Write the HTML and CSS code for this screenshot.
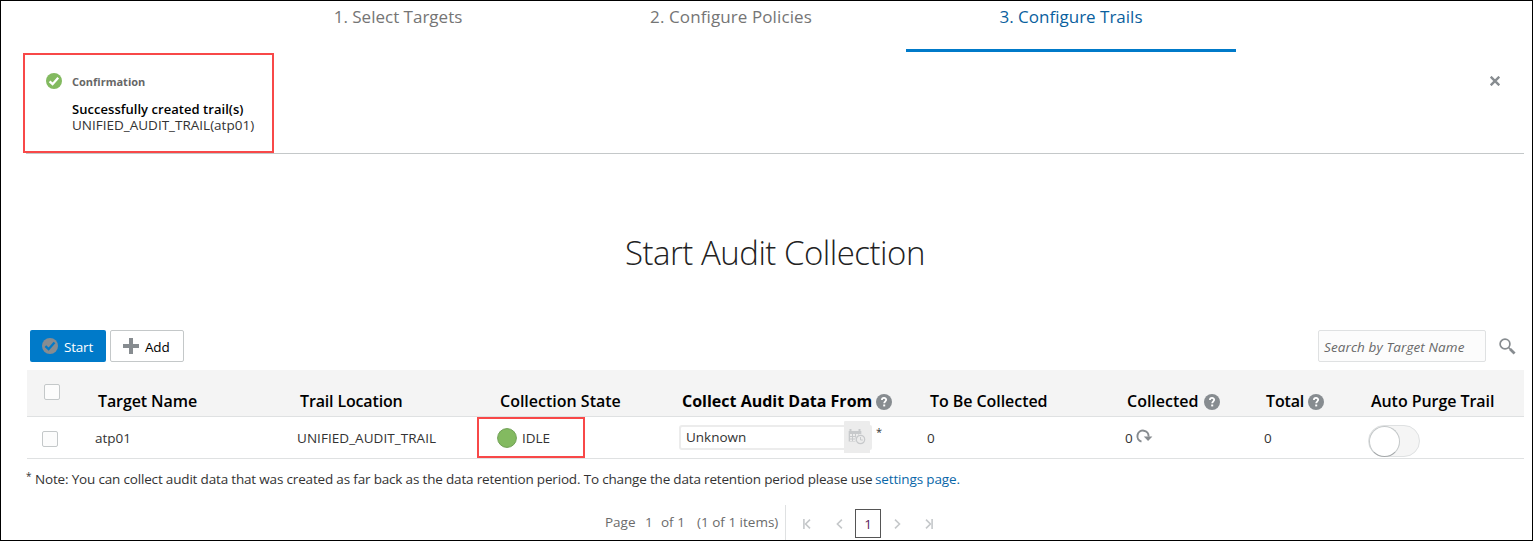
FILE: index.html
```
<!DOCTYPE html>
<html lang="en">
<head>
<meta charset="utf-8">
<title>Start Audit Collection</title>
<link rel="stylesheet" href="styles.css">
</head>
<body>
<div class="page">
  <nav class="train">
    <div class="step step-1">1. Select Targets</div>
    <div class="step step-2">2. Configure Policies</div>
    <div class="step step-3 active">3. Configure Trails</div>
  </nav>

  <section class="message">
    <svg class="ok" width="16" height="16" viewBox="0 0 16 16"><circle cx="8" cy="8" r="8" fill="#83ba60"/><path d="M3.6 8.3l3 2.9 5.6-6.4" fill="none" stroke="#fff" stroke-width="2.3"/></svg>
    <div class="message-text">
      <div class="message-type">Confirmation</div>
      <div class="message-title">Successfully created trail(s)</div>
      <div class="message-detail">UNIFIED_AUDIT_TRAIL(atp01)</div>
    </div>
    <svg class="close" width="10" height="10" viewBox="0 0 10 10"><path d="M.7.7l8.6 8.6M9.3.7L.7 9.3" stroke="#878c90" stroke-width="2.4"/></svg>
    <div class="mark mark-message"></div>
  </section>

  <h1 class="title">Start Audit Collection</h1>

  <div class="toolbar">
    <button class="btn primary"><svg width="16" height="16" viewBox="0 0 16 16"><circle cx="8" cy="8" r="8" fill="#878c90"/><path d="M3.4 8.2l3.2 3 5.9-6.6" fill="none" stroke="#007ac9" stroke-width="2.3"/></svg><span>Start</span></button>
    <button class="btn"><svg width="16" height="16" viewBox="0 0 16 16"><path d="M6 0h4v6h6v4h-6v6H6v-6H0V6h6z" fill="#878c90"/></svg><span class="add">Add</span></button>
    <div class="search">Search by Target Name</div>
    <svg class="lens" width="17" height="17" viewBox="0 0 17 17"><circle cx="6" cy="6" r="4.9" fill="none" stroke="#878c90" stroke-width="1.7"/><path d="M9.3 9.3l2 2" stroke="#878c90" stroke-width="1.6"/><path d="M11 11l4.6 4.4" stroke="#878c90" stroke-width="2.8"/></svg>
  </div>

  <div class="table">
    <div class="row head">
      <div class="cell"><span class="check"></span></div>
      <div class="cell tn">Target Name</div>
      <div class="cell tl">Trail Location</div>
      <div class="cell">Collection State</div>
      <div class="cell strong"><span>Collect Audit Data From</span><svg class="help" width="16" height="16" viewBox="0 0 16 16"><circle cx="8" cy="8" r="8" fill="#878c90"/><path d="M5.9 6.1c0-2.9 4.3-2.7 4.3-.3 0 1.5-2 1.6-2 3.5" fill="none" stroke="#fff" stroke-width="1.8"/><path d="M7.2 10.5h2v1.9h-2z" fill="#fff"/></svg></div>
      <div class="cell tbc">To Be Collected</div>
      <div class="cell"><span>Collected</span><svg class="help" width="16" height="16" viewBox="0 0 16 16"><circle cx="8" cy="8" r="8" fill="#878c90"/><path d="M5.9 6.1c0-2.9 4.3-2.7 4.3-.3 0 1.5-2 1.6-2 3.5" fill="none" stroke="#fff" stroke-width="1.8"/><path d="M7.2 10.5h2v1.9h-2z" fill="#fff"/></svg></div>
      <div class="cell total"><span>Total</span><svg class="help" width="16" height="16" viewBox="0 0 16 16"><circle cx="8" cy="8" r="8" fill="#878c90"/><path d="M5.9 6.1c0-2.9 4.3-2.7 4.3-.3 0 1.5-2 1.6-2 3.5" fill="none" stroke="#fff" stroke-width="1.8"/><path d="M7.2 10.5h2v1.9h-2z" fill="#fff"/></svg></div>
      <div class="cell apt">Auto Purge Trail</div>
    </div>
    <div class="row data">
      <div class="cell"><span class="check"></span></div>
      <div class="cell">atp01</div>
      <div class="cell loc">UNIFIED_AUDIT_TRAIL</div>
      <div class="cell state"><svg width="20" height="20" viewBox="0 0 20 20"><circle cx="10" cy="10" r="9.4" fill="#83ba60" stroke="#6f9f54" stroke-width="1"/></svg><span>IDLE</span><div class="mark mark-state"></div></div>
      <div class="cell from">
        <div class="date"><span>Unknown</span></div>
        <div class="picker"><svg width="18" height="18" viewBox="0 0 18 18"><path d="M.7 3h12.6v10.5H.7z" fill="#c7c9cb"/><path d="M2.5 1v2.5M11.5 1v2.5" stroke="#c7c9cb" stroke-width="2"/><path d="M2 6h2v2H2zM5 6h2v2H5zM8 6h2v2H8zM11 6h1.5v2H11zM2 9h2v1.5H2zM5 9h2v1.5H5zM8 9h2v1.5H8zM2 11.5h2V13H2zM5 11.5h2V13H5z" fill="#ececec"/><circle cx="12.5" cy="11.5" r="5.4" fill="#ececec"/><circle cx="12.5" cy="11.5" r="4.2" fill="none" stroke="#c7c9cb" stroke-width="1.2"/><path d="M12.5 9v3h2.3" fill="none" stroke="#c7c9cb"/></svg></div>
        <div class="date-end"></div>
        <span class="star">*</span>
      </div>
      <div class="cell">0</div>
      <div class="cell collected"><span>0</span><svg width="17" height="14" viewBox="0 0 17 14"><path d="M5.5 12.6A5.6 5.6 0 1 1 12.6 7.6" fill="none" stroke="#878c90" stroke-width="2"/><path d="M7.8 7.6h8.6l-4.3 4.3z" fill="#878c90"/></svg></div>
      <div class="cell zero">0</div>
      <div class="cell"><span class="switch"><span class="thumb"></span></span></div>
    </div>
  </div>

  <div class="note"><span class="note-star">*</span><span class="note-text">Note: You can collect audit data that was created as far back as the data retention period. To change the data retention period please use</span><a class="link">settings page.</a></div>

  <div class="pager">
    <span class="p-page">Page</span><span class="p-num">1</span><span class="p-of">of 1</span><span class="p-items">(1 of 1 items)</span>
    <div class="pager-nav">
      <svg width="8" height="10" viewBox="0 0 8 10"><path d="M.9 0v10" stroke="#c5c8ca" stroke-width="1.6"/><path d="M7 .6L2.6 5 7 9.4" fill="none" stroke="#c5c8ca" stroke-width="1.6"/></svg>
      <svg class="prev" width="7" height="10" viewBox="0 0 7 10"><path d="M5.9.6L1.4 5l4.5 4.4" fill="none" stroke="#c5c8ca" stroke-width="1.6"/></svg>
      <span class="current">1</span>
      <svg class="next" width="7" height="10" viewBox="0 0 7 10"><path d="M1 .6L5.5 5 1 9.4" fill="none" stroke="#c5c8ca" stroke-width="1.6"/></svg>
      <svg class="last" width="8" height="10" viewBox="0 0 8 10"><path d="M7.1 0v10" stroke="#c5c8ca" stroke-width="1.6"/><path d="M1 .6L5.4 5 1 9.4" fill="none" stroke="#c5c8ca" stroke-width="1.6"/></svg>
    </div>
  </div>
</div>
</body>
</html>
```
FILE: styles.css
```
* { box-sizing: border-box; }
body { margin: 0; background: #fff; color: #333; font: 13.5px/20px "Open Sans", "Noto Sans", sans-serif; }
svg { display: block; flex: none; }
.page { width: 1533px; height: 541px; border: 1px solid #000; overflow: hidden; display: flex; flex-direction: column; }

.train { display: flex; height: 51px; padding-left: 239px; flex: none; }
.step { height: 51px; padding-top: 5px; line-height: 22px; font-size: 17px; color: #757575; text-align: center; white-space: nowrap; }
.step-1 { width: 316px; }
.step-2 { width: 350px; letter-spacing: .1px; }
.step-3 { width: 330px; }
.active { color: #0a5f9e; border-bottom: 3px solid #007ac9; }

.message { position: relative; display: flex; flex: none; height: 102px; margin: 0 8px 0 25px; padding: 21px 24px 0 20px; border-bottom: 1px solid #c4c8c9; }
.ok { margin-right: 10px; }
.message-text { flex: 1; padding-top: 1px; }
.message-type { font-size: 11px; font-weight: 700; line-height: 16px; color: #666; }
.message-title { font-size: 13px; font-weight: 600; line-height: 16px; margin-top: 11px; color: #000; letter-spacing: .04px; }
.message-detail { line-height: 16px; }
.close { margin-top: 3px; }
.mark { position: absolute; border: 2px solid #f84848; }
.mark-message { left: -3px; top: 1px; width: 251px; height: 100px; }

.title { margin: 77px 0 0 624px; font-size: 33px; font-weight: 300; line-height: 44px; letter-spacing: -.5px; color: #222; white-space: nowrap; flex: none; }

.toolbar { display: flex; align-items: center; flex: none; height: 32px; margin: 55px 16px 0 29px; }
.btn { display: flex; align-items: center; height: 32px; margin: 0 4px 0 0; padding: 1px 0 0 12px; width: 76px; border: 0; border-radius: 2px; background: #fff; color: #000; font: inherit; }
.btn svg { margin-right: 6px; }
.btn span { letter-spacing: -.2px; }
.primary { background: #007ac9; color: #fff; }
.btn:not(.primary) { width: 74px; border: 1px solid #c4c8c9; }
.btn:not(.primary) svg { margin-top: -2px; }
.primary svg { margin-top: -1px; }
.search { margin-left: auto; width: 168px; height: 32px; line-height: 32px; padding-left: 5px; border: 1px solid #dfe1e2; border-radius: 2px; background: #fcfcfc; color: #696969; font-style: italic; letter-spacing: .1px; white-space: nowrap; }
.lens { margin-left: 13px; }

.table { flex: none; margin: 8px 8px 0 26px; }
.row { display: grid; grid-template-columns: 68px 202px 200px 182px 248px 197px 139px 105px 156px; border-bottom: 1px solid #dfe1e2; }
.cell { display: flex; align-items: center; white-space: nowrap; }
.head { height: 47px; background: #f4f4f4; color: #000; font-size: 16px; font-weight: 600; padding-top: 15px; }
.head .cell { padding-left: 3px; }
.tn { letter-spacing: -.1px; }
.tl { letter-spacing: -.15px; }
.tbc, .apt { letter-spacing: -.06px; }
.strong { font-weight: 700; }
.help { margin: 2px 0 0 5px; }
.strong .help, .total .help { margin-left: 4px; }
.total { letter-spacing: -.15px; }
.check { width: 16px; height: 16px; border: 1px solid #c4c8c9; border-radius: 2px; background: #fcfcfc; margin-left: 15px; }
.head .check { margin: -17px 0 0 14px; }
.data { height: 42px; }
.data .check { margin-top: 3px; }
.state { position: relative; gap: 5px; }
.mark-state { left: -20px; top: 0; width: 108px; height: 41px; }
.loc { letter-spacing: .05px; }
.date { width: 165px; height: 25px; border: 2px solid #ececec; border-right: 0; border-radius: 3px 0 0 3px; line-height: 21px; padding-left: 5px; }
.picker { width: 26px; height: 32px; margin-top: -1px; background: #ececec; border-radius: 1px 1px 0 0; display: flex; align-items: center; justify-content: center; }
.date-end { width: 2px; height: 25px; background: #ececec; border-radius: 0 3px 3px 0; }
.star { font-size: 11px; margin: -12px 0 0 4px; }
.collected { gap: 3px; padding-left: 1px; }
.collected span { margin-top: 1px; }
.collected svg { margin-top: -3px; }
.zero { padding-left: 1px; }
.switch { display: block; width: 52px; height: 32px; margin: 6px 0 0 0; border: 1px solid #dfe1e2; border-radius: 16px; background: #f5f5f5; }
.thumb { display: block; width: 31px; height: 31px; border: 1px solid #c4c8c9; border-bottom-color: #a4a8aa; border-radius: 50%; background: #fff; }

.note { display: flex; flex: none; height: 20px; margin: 10px 0 0 25px; white-space: nowrap; }
.note-star { font-size: 10px; line-height: 14px; width: 9px; }
.note-text { width: 840px; letter-spacing: -.175px; }
.link { color: #0a67a8; letter-spacing: -.14px; }

.pager { display: flex; flex: none; height: 35px; margin: 16px 0 0 604px; line-height: 35px; color: #6b6b6b; white-space: nowrap; }
.p-page { width: 40px; }
.p-num { width: 16px; }
.p-of { width: 36px; }
.p-items { width: 88px; }
.pager-nav { display: flex; align-items: center; padding: 1px 0 0 17px; border-left: 1px solid #dfe1e2; }
.pager-nav svg { margin-top: 2px; }
.pager-nav .prev { margin-left: 25px; }
.current { width: 26px; height: 29px; line-height: 28px; margin: 0 13px 0 12px; border: 1px solid #555; text-align: center; color: #5b1a5b; }
.pager-nav .last { margin-left: 24px; }
```
